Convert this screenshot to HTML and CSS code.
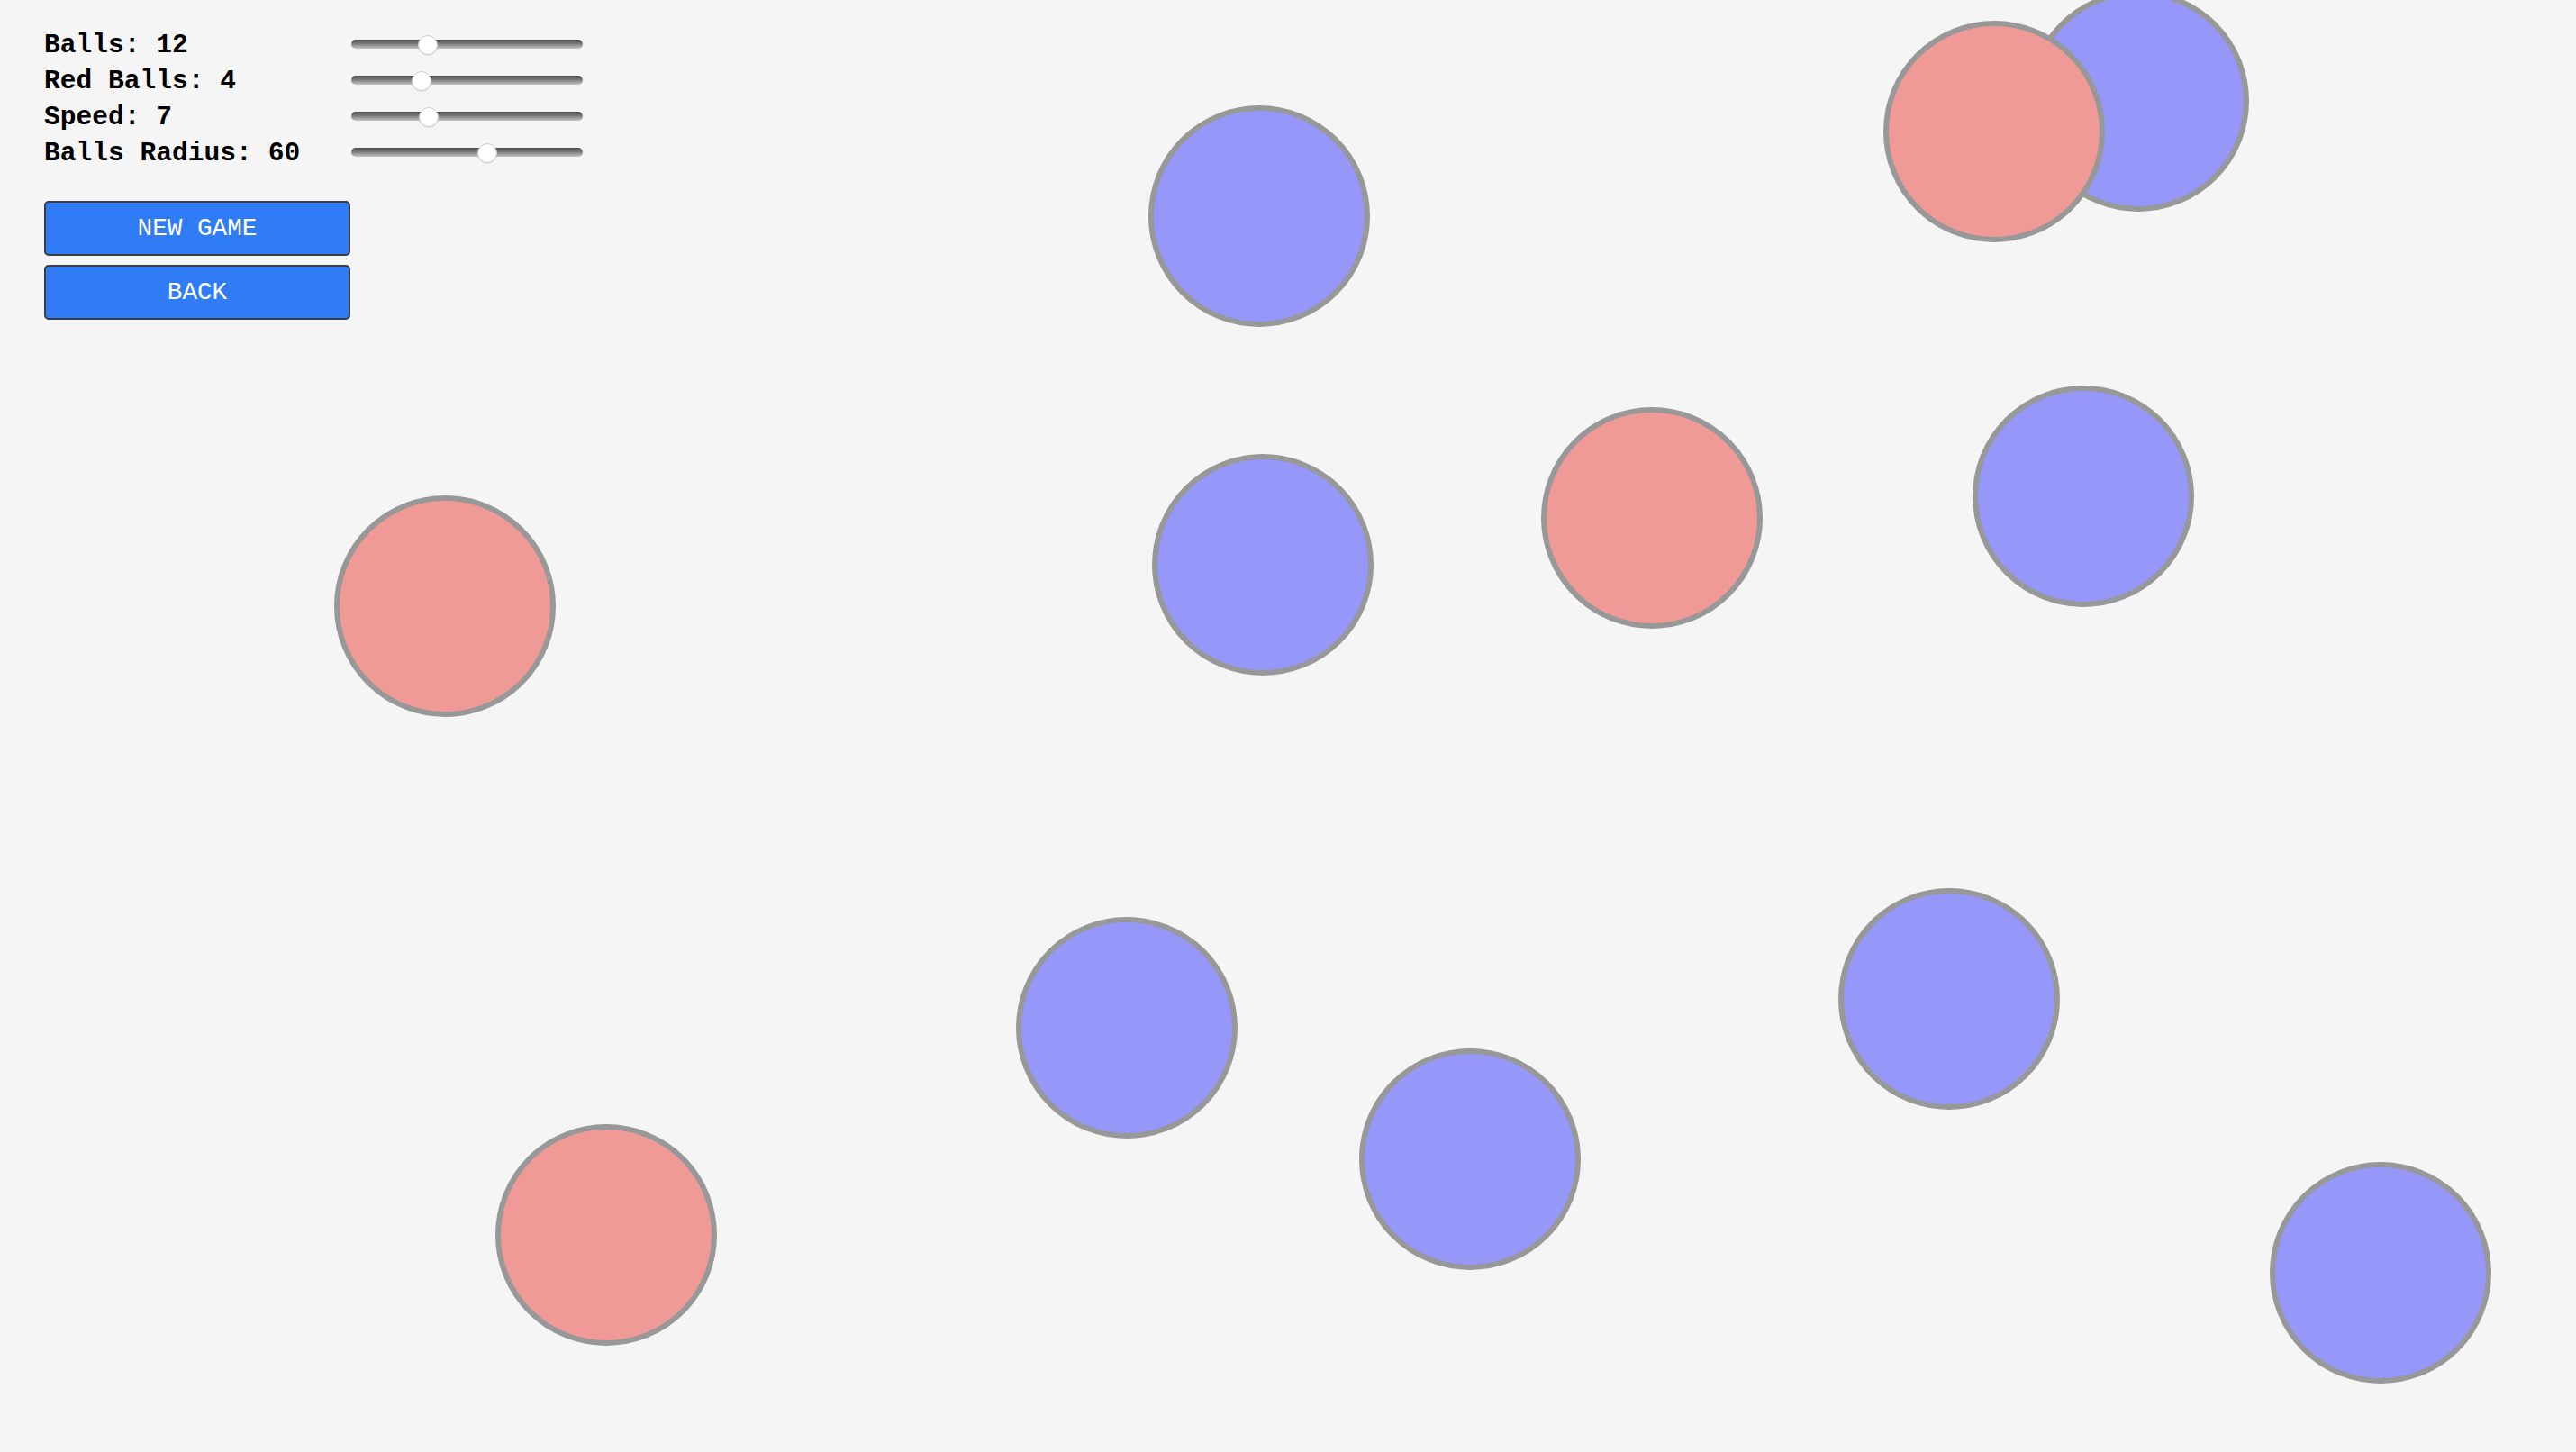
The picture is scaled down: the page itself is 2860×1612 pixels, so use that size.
FILE: index.html
```html
<!DOCTYPE html>
<html lang="en">
<head>
<meta charset="utf-8">
<title>Balls</title>
<link rel="stylesheet" href="styles.css">
</head>
<body>
<div class="stage">
  <svg class="field" width="2860" height="1612" viewBox="0 0 2860 1612" xmlns="http://www.w3.org/2000/svg">
    <g class="balls">
      <circle class="ball blue" cx="1398" cy="240" r="120"/>
      <circle class="ball blue" cx="2374" cy="112" r="120"/>
      <circle class="ball red" cx="2214" cy="146" r="120"/>
      <circle class="ball red" cx="494" cy="673" r="120"/>
      <circle class="ball blue" cx="1402" cy="627" r="120"/>
      <circle class="ball red" cx="1834" cy="575" r="120"/>
      <circle class="ball blue" cx="2313" cy="551" r="120"/>
      <circle class="ball blue" cx="1251" cy="1141" r="120"/>
      <circle class="ball blue" cx="1632" cy="1287" r="120"/>
      <circle class="ball blue" cx="2164" cy="1109" r="120"/>
      <circle class="ball blue" cx="2643" cy="1413" r="120"/>
      <circle class="ball red" cx="673" cy="1371" r="120"/>
    </g>
  </svg>

  <div class="panel">
    <div class="settings">
      <label class="label" for="balls">Balls: 12</label>
      <input class="slider" id="balls" type="range" min="1" max="36" value="12">
      <label class="label" for="red">Red Balls: 4</label>
      <input class="slider" id="red" type="range" min="0" max="14" value="4">
      <label class="label" for="speed">Speed: 7</label>
      <input class="slider" id="speed" type="range" min="0" max="22" value="7">
      <label class="label" for="radius">Balls Radius: 60</label>
      <input class="slider" id="radius" type="range" min="10" max="94" value="60">
    </div>
    <div class="actions">
      <button class="btn" type="button">NEW GAME</button>
      <button class="btn" type="button">BACK</button>
    </div>
  </div>
</div>
</body>
</html>
```

FILE: styles.css
```css
html, body {
  margin: 0;
  padding: 0;
  background: #f5f5f5;
  overflow: hidden;
}

.stage {
  position: relative;
  width: 2860px;
  height: 1612px;
}

.field {
  display: block;
}

.ball {
  stroke: #989898;
  stroke-width: 6;
}

.ball.blue {
  fill: #9597f9;
}

.ball.red {
  fill: #f09a97;
}

.panel {
  position: absolute;
  top: 30px;
  left: 49px;
  display: flex;
  flex-direction: column;
  gap: 33px;
}

.settings {
  display: grid;
  grid-template-columns: 341px 257px;
  grid-auto-rows: 40px;
  align-items: center;
}

.label {
  font-family: "Liberation Mono", "Courier New", monospace;
  font-weight: bold;
  font-size: 29.6px;
  line-height: 40px;
  color: #000;
  white-space: nowrap;
}

.slider {
  -webkit-appearance: none;
  appearance: none;
  width: 257px;
  height: 24px;
  margin: 0;
  padding: 0;
  background: transparent;
  position: relative;
  top: -1px;
}

.slider::-webkit-slider-runnable-track {
  height: 10px;
  border-radius: 5px;
  background: linear-gradient(to bottom, #4f4f4f 0%, #7a7a7a 45%, #c4c4c4 100%);
}

.slider::-webkit-slider-thumb {
  -webkit-appearance: none;
  appearance: none;
  width: 22px;
  height: 22px;
  margin-top: -5px;
  border-radius: 50%;
  background: #fff;
  border: 1px solid #cfcfcf;
  box-sizing: border-box;
  box-shadow: 0 1px 1px rgba(0, 0, 0, 0.08);
}

.actions {
  display: flex;
  flex-direction: column;
  gap: 10px;
}

.btn {
  width: 340px;
  height: 61px;
  margin: 0;
  padding: 0;
  background: #2f7cf6;
  border: 2px solid #3a3d44;
  border-radius: 5px;
  color: #fff;
  font-family: "Liberation Mono", "Courier New", monospace;
  font-weight: normal;
  font-size: 27.7px;
  line-height: 1;
  text-align: center;
  cursor: pointer;
}
```
